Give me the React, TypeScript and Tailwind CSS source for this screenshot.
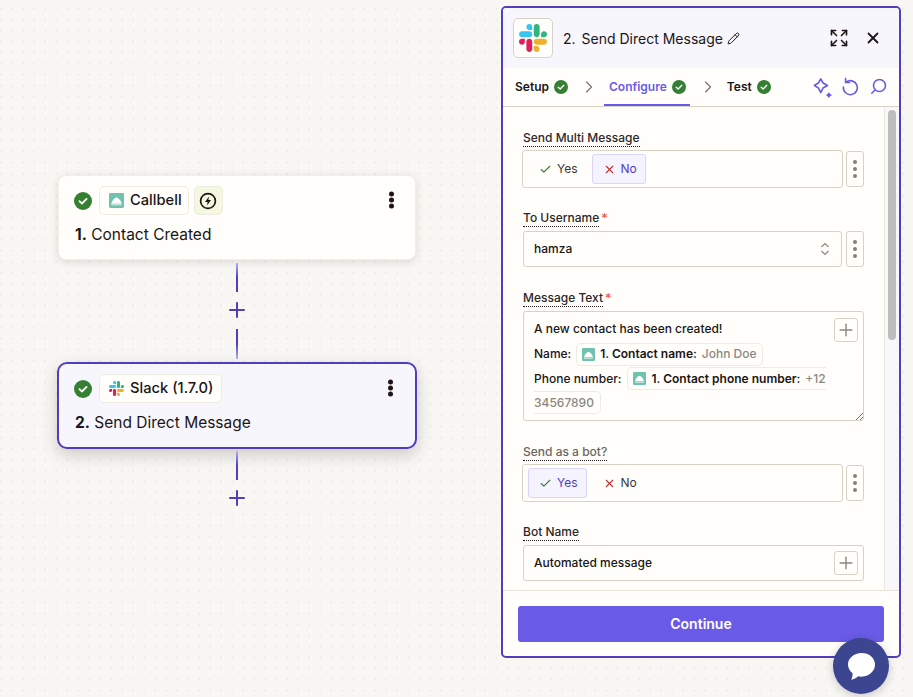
import React from "react";
import { Check, ChevronRight, Expand, Pencil, Plus, X } from "lucide-react";

const SlackLogo = ({ size }: { size: number }) => (
  <svg width={size} height={size} viewBox="0 0 122.8 122.8" className="shrink-0">
    <path d="M25.8 77.6c0 7.1-5.8 12.9-12.9 12.9S0 84.7 0 77.6s5.8-12.9 12.9-12.9h12.9v12.9zm6.5 0c0-7.1 5.8-12.9 12.9-12.9s12.9 5.8 12.9 12.9v32.3c0 7.1-5.8 12.9-12.9 12.9s-12.9-5.8-12.9-12.9V77.6z" fill="#e01e5a" />
    <path d="M45.2 25.8c-7.1 0-12.9-5.8-12.9-12.9S38.1 0 45.2 0s12.9 5.8 12.9 12.9v12.9H45.2zm0 6.5c7.1 0 12.9 5.8 12.9 12.9s-5.8 12.9-12.9 12.9H12.9C5.8 58.1 0 52.3 0 45.2s5.8-12.9 12.9-12.9h32.3z" fill="#36c5f0" />
    <path d="M97 45.2c0-7.1 5.8-12.9 12.9-12.9s12.9 5.8 12.9 12.9-5.8 12.9-12.9 12.9H97V45.2zm-6.5 0c0 7.1-5.8 12.9-12.9 12.9s-12.9-5.8-12.9-12.9V12.9C64.7 5.8 70.5 0 77.6 0s12.9 5.8 12.9 12.9v32.3z" fill="#2eb67d" />
    <path d="M77.6 97c7.1 0 12.9 5.8 12.9 12.9s-5.8 12.9-12.9 12.9-12.9-5.8-12.9-12.9V97h12.9zm0-6.5c-7.1 0-12.9-5.8-12.9-12.9s5.8-12.9 12.9-12.9h32.3c7.1 0 12.9 5.8 12.9 12.9s-5.8 12.9-12.9 12.9H77.6z" fill="#ecb22e" />
  </svg>
);

const CallbellLogo = ({ size }: { size: number }) => (
  <svg width={size} height={size} viewBox="0 0 16 16" className="shrink-0">
    <rect width="16" height="16" rx="1.5" fill="#6fc2ab" />
    <path d="M2.500 11.500C3 8 5.500 5.500 8 4.500c2.500 1 5 3.500 5.500 7z" fill="#fff" />
    <rect x="2.500" y="12" width="11" height="1.200" fill="#d9f0e9" />
  </svg>
);

const GreenCheck = ({ size }: { size: number }) => (
  <svg width={size} height={size} viewBox="0 0 18 18" className="shrink-0">
    <circle cx="9" cy="9" r="9" fill="#357f32" />
    <path d="M5.400 9.200l2.500 2.300 4.700-4.600" fill="none" stroke="#fff" strokeWidth="1.8" strokeLinecap="round" strokeLinejoin="round" />
  </svg>
);

const Connector = () => (
  <div className="flex flex-col items-center w-full">
    <div className="w-[2px] h-[29px] bg-gradient-to-b from-[#b9b2ec] via-[#503ebd] to-[#503ebd]" />
    <Plus size={24} strokeWidth={2} className="text-[#503ebd] my-[6px]" />
  </div>
);

const Chip = ({ children, pr }: { children: React.ReactNode; pr: string }) => (
  <div className={`flex items-center gap-[6px] h-[29px] pl-[9px] ${pr} rounded-[5px] border border-[#eeebe3] bg-[#fffefb] text-[14.7px] font-medium text-[#201515]`}>
    {children}
  </div>
);

const CardDots = ({ mr }: { mr: string }) => (
  <div className={`ml-auto ${mr} flex flex-col gap-[1.6px] -translate-y-[0.5px]`}>
    <span className="w-[4.6px] h-[4.6px] rounded-full bg-[#201515]" />
    <span className="w-[4.6px] h-[4.6px] rounded-full bg-[#201515]" />
    <span className="w-[4.6px] h-[4.6px] rounded-full bg-[#201515]" />
  </div>
);

const Label = ({ text, required, muted }: { text: string; required?: boolean; muted?: boolean }) => (
  <div className="flex items-start h-[18px] mb-[3px]">
    <span className={`text-[12px] leading-[16px] font-medium border-b border-dotted border-[#201515] ${muted ? "text-[#6b6660]" : "text-[#2d2626]"}`}>
      {text}
    </span>
    {required && <span className="text-[13px] leading-[16px] text-[#f0502e] ml-[2px]">*</span>}
  </div>
);

const Kebab = ({ h }: { h: string }) => (
  <div className={`w-[18px] ${h} flex items-center justify-center shrink-0 rounded-[3px] border border-[#d6d2c6] bg-[#fffefb]`}>
    <div className="flex flex-col gap-[3px]">
      <span className="w-[4px] h-[4px] rounded-full bg-[#858079]" />
      <span className="w-[4px] h-[4px] rounded-full bg-[#858079]" />
      <span className="w-[4px] h-[4px] rounded-full bg-[#858079]" />
    </div>
  </div>
);

const Option = ({ kind, active }: { kind: "yes" | "no"; active?: boolean }) => (
  <div
    className={`flex items-center gap-[5px] h-[30px] rounded-[3px] border pl-[10px] pr-[8px] text-[12px] ${
      active ? "bg-[#f4f3fe] border-[#d9d6f8] text-[#503ebd]" : "border-transparent text-[#3b3535]"
    }`}
  >
    {kind === "yes" ? (
      <Check size={13} strokeWidth={2} className="text-[#357f32]" />
    ) : (
      <X size={13} strokeWidth={2} className="text-[#b5332e]" />
    )}
    {kind === "yes" ? "Yes" : "No"}
  </div>
);

const Toggle = ({ selected }: { selected: "yes" | "no" }) => (
  <div className="flex items-center gap-[3px] -ml-[1px] -mt-[1px]">
    <div className="flex-1 h-[38px] flex items-center gap-[5px] pl-[5px] rounded-[3px] border border-[#d6d2c6] bg-[#fffefb]">
      <Option kind="yes" active={selected === "yes"} />
      <Option kind="no" active={selected === "no"} />
    </div>
    <Kebab h="h-[36px]" />
  </div>
);

const AddButton = () => (
  <div className="w-[24px] h-[24px] flex items-center justify-center rounded-[3px] border border-[#d6d2c6] bg-[#fffefb]">
    <Plus size={20} strokeWidth={1.7} className="text-[#8a867f]" />
  </div>
);

const Pill = ({ children, cut }: { children: React.ReactNode; cut?: "right" | "left" }) => (
  <span
    className={`inline-flex items-center gap-[5px] h-[23px] px-[5px] border border-[#eeebe3] ${
      cut === "right" ? "border-r-0 rounded-l-[5px] pr-0" : cut === "left" ? "border-l-0 rounded-r-[5px] pl-0" : "rounded-[5px]"
    }`}
  >
    {children}
  </span>
);

const Tab = ({ label, active }: { label: string; active?: boolean }) => (
  <div className={`flex items-center gap-[5px] h-full pl-[5px] pr-[4px] border-y-2 border-t-transparent ${active ? "border-b-[#6a5be6] text-[#6a5be6]" : "border-b-transparent text-[#201515]"}`}>
    <span className="text-[12px] font-semibold">{label}</span>
    <GreenCheck size={14} />
  </div>
);

export default function App() {
  return (
    <div
      className="relative w-[913px] h-[697px] overflow-hidden flex bg-[#f8f7f4] bg-[radial-gradient(#eae8e1_1px,transparent_1px)] bg-[size:11px_11px] bg-[position:-4px_3.5px] text-[#201515]"
      style={{ fontFamily: "Inter, 'Noto Sans', sans-serif" }}
    >
      {/* Canvas */}
      <div className="w-[501px] shrink-0 pl-[57px] pt-[175px]">
        <div className="w-[360px] flex flex-col">
          <div className="mx-[1px] h-[85px] rounded-[8px] bg-[#fffefa] border border-[#f1efe8] shadow-[0_2px_8px_rgba(60,50,30,0.14)] px-[15px] pt-[10px]">
            <div className="flex items-center">
              <GreenCheck size={18} />
              <div className="ml-[7px]">
                <Chip pr="pr-[6px]">
                  <CallbellLogo size={15} />
                  Callbell
                </Chip>
              </div>
              <div className="ml-[5px] w-[29px] h-[29px] rounded-[5px] border border-[#eeebe3] bg-[#f4f8df] flex items-center justify-center">
                <svg width="18" height="18" viewBox="0 0 18 18">
                  <circle cx="9" cy="9" r="7.400" fill="none" stroke="#201515" strokeWidth="1.7" />
                  <path d="M10 4.500L6 10h2.600L8 13.500 12 8H9.400z" fill="#201515" />
                </svg>
              </div>
              <CardDots mr="mr-[6.5px]" />
            </div>
            <div className="mt-[10px] ml-[1px] text-[15.5px] leading-[20px]">
              <span className="font-bold">1.</span> Contact Created
            </div>
          </div>
          <div className="h-[3px]" />
          <Connector />
          <div className="h-[1px]" />
          <div className="flex flex-col items-center">
            <div className="w-[2px] h-[30px] bg-gradient-to-b from-[#503ebd] via-[#503ebd] to-[#b9b2ec]" />
          </div>
          <div className="h-[3px]" />
          <div className="h-[87px] rounded-[10px] bg-[#f7f6fd] border-2 border-[#503ebd] shadow-[0_6px_16px_rgba(60,50,30,0.22)] px-[15px] pt-[10px]">
            <div className="flex items-center">
              <GreenCheck size={18} />
              <div className="ml-[7px]">
                <Chip pr="pr-[8px]">
                  <SlackLogo size={15} />
                  Slack (1.7.0)
                </Chip>
              </div>
              <CardDots mr="mr-[7.5px]" />
            </div>
            <div className="mt-[10px] ml-[1px] text-[15.5px] leading-[20px]">
              <span className="font-bold">2.</span> Send Direct Message
            </div>
          </div>
          <div className="h-[2px]" />
          <Connector />
        </div>
      </div>

      {/* Panel */}
      <div className="w-[400px] h-[652px] mt-[6px] flex flex-col rounded-[5px] border-2 border-[#503ebd] bg-[#fffefb] overflow-hidden">
        <div className="h-[60px] shrink-0 flex items-center bg-[#f7f6fd] pl-[10px] pr-[17px]">
          <div className="w-[40px] h-[40px] rounded-[5px] border border-[#d6d2c6] bg-[#fffefb] flex items-center justify-center">
            <SlackLogo size={28} />
          </div>
          <span className="ml-[10px] text-[14px]">2.</span>
          <span className="ml-[6px] text-[14px]">Send Direct Message</span>
          <Pencil size={13} strokeWidth={1.8} className="ml-[4px] text-[#201515]" />
          <Expand size={20} strokeWidth={2} className="ml-auto text-[#201515]" />
          <X size={18} strokeWidth={2.4} className="ml-[15px] text-[#201515]" />
        </div>

        <div className="h-[39px] shrink-0 flex items-center pl-[7px] pr-[11px] border-b border-[#d6d2c6]">
          <Tab label="Setup" />
          <ChevronRight size={20} strokeWidth={1.4} className="ml-[7px] mr-[5px] text-[#77726b]" />
          <Tab label="Configure" active />
          <ChevronRight size={20} strokeWidth={1.4} className="ml-[8px] mr-[4px] text-[#77726b]" />
          <Tab label="Test" />
          <div className="ml-auto flex items-center text-[#6a5be6]">
            <svg width="23" height="23" viewBox="0 0 20 20" fill="none" stroke="currentColor" strokeWidth="1.4" strokeLinejoin="round">
              <path d="M8.500 2.500l2 3.600 3.800 2.100-3.800 2.200-2 4.100-2.100-4.100-3.600-2.200 3.600-2.100z" />
              <path d="M15.500 14.500l.8 1.400 1.400.7-1.400.8-.8 1.300-.7-1.300-1.300-.8 1.300-.7z" fill="currentColor" strokeWidth="0.8" />
            </svg>
            <svg width="20" height="20" viewBox="0 0 20 20" fill="none" stroke="currentColor" strokeWidth="1.6" strokeLinecap="round" strokeLinejoin="round" className="ml-[6px]">
              <path d="M6 5.200A7 7 0 1 1 3.400 10" />
              <path d="M5.600 1.500v4h4" />
            </svg>
            <svg width="20" height="20" viewBox="0 0 20 20" fill="none" stroke="currentColor" strokeWidth="1.6" strokeLinecap="round" className="ml-[8px]">
              <circle cx="11.500" cy="8.500" r="6" />
              <path d="M6.800 13.200l-3 3" />
            </svg>
          </div>
        </div>

        <div className="flex-1 min-h-0 flex">
          <div className="flex-1 min-w-0 overflow-hidden pl-[20px] pr-[20px] pt-[23px]">
            <Label text="Send Multi Message" />
            <Toggle selected="no" />

            <div className="h-[22px]" />
            <Label text="To Username" required />
            <div className="flex items-center gap-[4px]">
              <div className="flex-1 h-[36px] flex items-center justify-between pl-[10px] pr-[11px] rounded-[3px] border border-[#d6d2c6] text-[12px] font-medium">
                hamza
                <svg width="10" height="14" viewBox="0 0 10 14" fill="none" stroke="#8a857d" strokeWidth="1.1">
                  <path d="M1.500 5L5 1.500 8.500 5M1.500 9L5 12.500 8.500 9" />
                </svg>
              </div>
              <Kebab h="h-[36px]" />
            </div>

            <div className="h-[23px]" />
            <Label text="Message Text" required />
            <div className="relative h-[110px] rounded-[3px] border border-[#d6d2c6] pl-[10px] pt-[7px] text-[12px] font-medium leading-[24px]">
              <div className="h-[19px] leading-[19px]">A new contact has been created!</div>
              <div className="flex items-center gap-[5px] h-[24px] mt-[4px]">
                Name:
                <Pill>
                  <CallbellLogo size={13} />
                  <span className="font-semibold">1. Contact name:</span>
                  <span className="text-[#8c8780]">John Doe</span>
                </Pill>
              </div>
              <div className="flex items-center gap-[6px] h-[24px] mt-[0.5px]">
                Phone number:
                <Pill cut="right">
                  <CallbellLogo size={13} />
                  <span className="font-semibold">1. Contact phone number:</span>
                  <span className="text-[#8c8780]">+12</span>
                </Pill>
              </div>
              <div className="flex items-center h-[24px]">
                <Pill cut="left">
                  <span className="text-[#8c8780] pr-[1px]">34567890</span>
                </Pill>
              </div>
              <div className="absolute top-[6px] right-[5px]">
                <AddButton />
              </div>
              <svg width="8" height="8" viewBox="0 0 8 8" stroke="#555" strokeWidth="0.8" className="absolute right-0 bottom-0">
                <path d="M1 8L8 1M5 8L8 5" />
              </svg>
            </div>

            <div className="h-[23px]" />
            <Label text="Send as a bot?" muted />
            <Toggle selected="yes" />

            <div className="h-[22px]" />
            <Label text="Bot Name" />
            <div className="h-[36px] flex items-center justify-between pl-[10px] pr-[5px] rounded-[3px] border border-[#d6d2c6] text-[12px] font-medium">
              Automated message
              <AddButton />
            </div>
          </div>
          <div className="w-[15px] shrink-0 bg-[#f8f8fc] border-l border-[#ebe9e2] px-[3px] pt-[3px]">
            <div className="w-[8px] h-[230px] rounded-full bg-[#bdbdbd]" />
          </div>
        </div>

        <div className="h-[66px] shrink-0 border-t border-[#e6e3da] px-[15px] pt-[15px]">
          <div className="h-[36px] pb-[2px] rounded-[3px] bg-[#695be6] flex items-center justify-center text-white text-[14px] font-semibold">
            Continue
          </div>
        </div>
      </div>

      {/* Chat launcher */}
      <div className="absolute left-[833px] top-[638px] w-[56px] h-[56px] rounded-full bg-[#3b4590] shadow-[0_2px_10px_rgba(0,0,0,0.2)] flex items-center justify-center">
        <svg width="29" height="29" viewBox="0 0 30 30">
          <path d="M15 1C7.300 1 1 6.400 1 13c0 3.600 1.900 6.800 4.800 9 0 2-.3 4.600-1.500 6.800 2.900-.7 5.200-1.900 7.200-3.700 1 .2 2.300.4 3.500.4 7.700 0 14-5.400 14-12.500S22.700 1 15 1z" fill="#fff" />
        </svg>
      </div>
    </div>
  );
}
